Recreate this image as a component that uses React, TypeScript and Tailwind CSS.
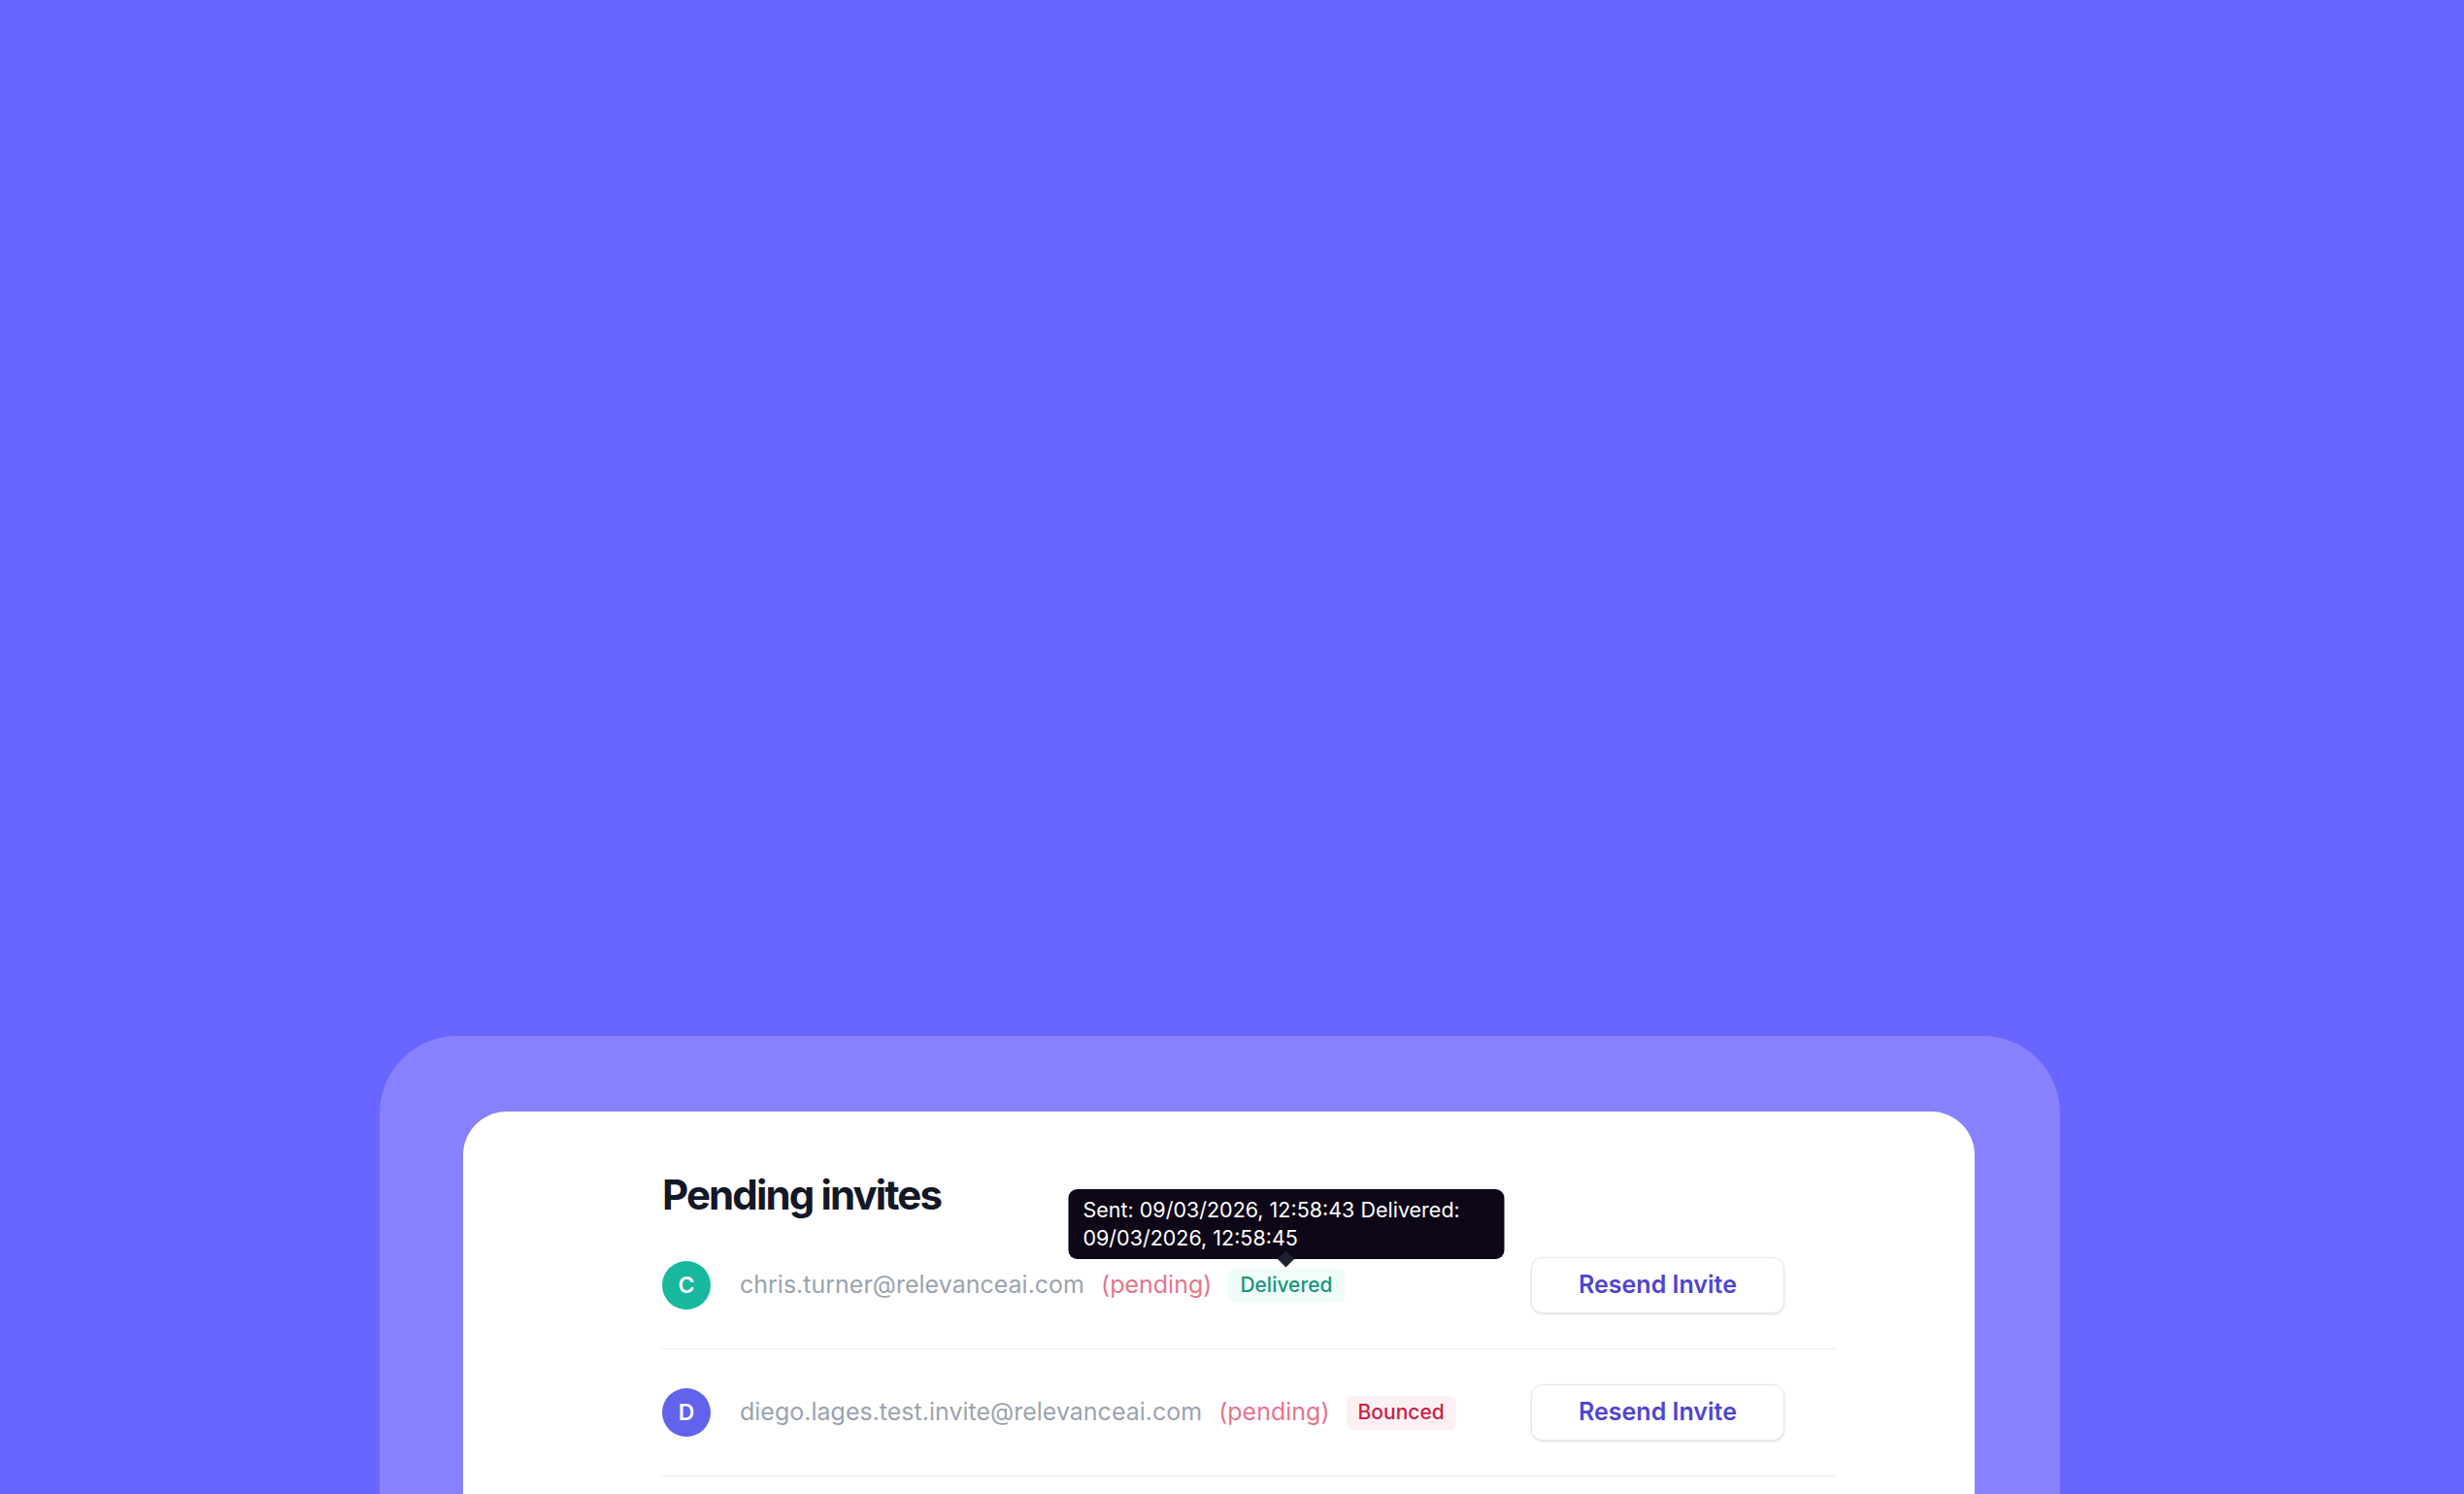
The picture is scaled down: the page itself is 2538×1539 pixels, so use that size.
import React from "react";

type Invite = {
  email: string;
  initial: string;
  avatar: string;
  status: "Delivered" | "Bounced";
  tooltip?: string;
};

const invites: Invite[] = [
  {
    email: "chris.turner@relevanceai.com",
    initial: "C",
    avatar: "bg-[#17b89d]",
    status: "Delivered",
    tooltip: "Sent: 09/03/2026, 12:58:43 Delivered: 09/03/2026, 12:58:45",
  },
  {
    email: "diego.lages.test.invite@relevanceai.com",
    initial: "D",
    avatar: "bg-[#6163ea]",
    status: "Bounced",
  },
];

function StatusBadge({ status, tooltip }: { status: Invite["status"]; tooltip?: string }) {
  const delivered = status === "Delivered";
  return (
    <div className="relative">
      <span
        className={`flex h-[35px] items-center rounded-md px-[12px] text-[21px] font-medium ${
          delivered ? "bg-[#f0fcf8] text-[#18957a]" : "bg-[#fdf0f2] text-[#c81f48]"
        }`}
      >
        {status}
      </span>
      {tooltip && (
        <div className="absolute bottom-full left-1/2 mb-[10px] w-[449px] -translate-x-1/2 rounded-[9px] bg-[#0d0717] px-[15px] py-[7px] text-[21.5px] leading-[29px] text-white">
          {tooltip}
          <span className="absolute -bottom-[6px] left-1/2 h-3 w-3 -translate-x-1/2 rotate-45 bg-[#1d2030]" />
        </div>
      )}
    </div>
  );
}

export default function App() {
  return (
    <div className="h-[1539px] w-full overflow-hidden bg-[#6965ff] pl-[391px] pt-[1067px] font-['Inter','Liberation_Sans',sans-serif]">
      <div className="w-[1731px] rounded-t-[80px] bg-[#8781fd] pl-[86px] pr-[88px] pt-[78px]">
        <div className="min-h-[700px] rounded-t-[45px] bg-white pl-[205px] pt-[61px]">
          <h2 className="text-[42px] font-bold leading-[50px] tracking-[-0.045em] text-[#121826]">
            Pending invites
          </h2>

          <div className="mt-[3px] w-[1208px]">
            {invites.map((inv) => (
              <div
                key={inv.email}
                className="flex h-[131px] items-center border-b border-[#e8eaee] pr-[52px]"
              >
                <div
                  className={`flex h-[50px] w-[50px] shrink-0 items-center justify-center rounded-full text-[23px] font-semibold text-white ${inv.avatar}`}
                >
                  {inv.initial}
                </div>
                <span className="ml-[30px] text-[25px] text-[#9ca3af]">{inv.email}</span>
                <span className="ml-[17px] text-[25px] text-[#e6758c]">(pending)</span>
                <div className="ml-[17px]">
                  <StatusBadge status={inv.status} tooltip={inv.tooltip} />
                </div>
                <button className="ml-auto h-[58px] w-[261px] rounded-xl border border-[#e6e7eb] bg-white text-[25px] font-semibold text-[#4f45cf] shadow-sm">
                  Resend Invite
                </button>
              </div>
            ))}
          </div>
        </div>
      </div>
    </div>
  );
}
